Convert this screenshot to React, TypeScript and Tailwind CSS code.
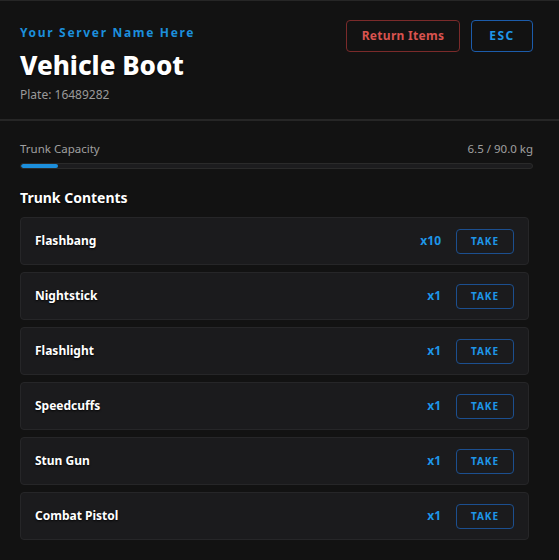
const items = [
    { name: "Flashbang", qty: 10 },
    { name: "Nightstick", qty: 1 },
    { name: "Flashlight", qty: 1 },
    { name: "Speedcuffs", qty: 1 },
    { name: "Stun Gun", qty: 1 },
    { name: "Combat Pistol", qty: 1 },
]

const App = () => {
    return (
        <div className="w-[559px] h-[560px] bg-[#121212] border-t border-[#262626] overflow-hidden font-['Noto_Sans',sans-serif] text-white">
            <div className="flex justify-between px-5 pt-[19px] pb-[16px] border-b-2 border-[#262626]">
                <div className="flex flex-col">
                    <p className="text-[12px] font-bold tracking-[0.14em] text-[#1c8fdc] leading-[16px] mt-[5px]">Your Server Name Here</p>
                    <h1 className="text-[26px] font-extrabold leading-[32px] mt-[8px] [text-shadow:0_1px_2px_rgba(0,0,0,0.8)]">Vehicle Boot</h1>
                    <p className="text-[12px] text-[#9a9a9a] leading-[16px] mt-[6px]">Plate: 16489282</p>
                </div>
                <div className="flex gap-[11px] pr-[6px]">
                    <button className="h-[32px] w-[114px] rounded border border-[#7a2a2a] text-[12px] font-bold text-[#d9534f] tracking-wide">Return Items</button>
                    <button className="h-[32px] w-[62px] rounded border border-[#1c5cab] text-[12px] font-bold text-[#1e96e8] tracking-[0.12em]">ESC</button>
                </div>
            </div>

            <div className="px-5 pt-[20px]">
                <div className="flex justify-between text-[11.5px] text-[#a0a0a0] leading-[16px] pr-[6px]">
                    <span>Trunk Capacity</span>
                    <span>6.5 / 90.0 kg</span>
                </div>
                <div className="mt-[6px] mr-[6px] h-[6px] rounded-full bg-[#1c1c1e] border border-[#2a2a2a] overflow-hidden">
                    <div className="h-full bg-[#1c8fdc] rounded-full" style={{ width: `${(6.5 / 90) * 100}%` }} />
                </div>

                <h2 className="text-[14px] font-bold mt-[20px] leading-[18px] [text-shadow:0_1px_2px_rgba(0,0,0,0.8)]">Trunk Contents</h2>

                <div className="flex flex-col gap-[7px] mt-[10px] pr-[10px]">
                    {items.map((item) => (
                        <div key={item.name} className="h-[48px] flex items-center justify-between pl-[14px] pr-[14px] bg-[#1b1b1d] border border-[#262628] rounded">
                            <span className="text-[12px] font-bold [text-shadow:0_1px_2px_rgba(0,0,0,0.9)]">{item.name}</span>
                            <div className="flex items-center gap-[15px]">
                                <span className="text-[12px] font-bold text-[#1e96e8]">x{item.qty}</span>
                                <button className="h-[25px] w-[58px] rounded border border-[#1c4f8f] text-[10px] font-bold text-[#1e96e8] tracking-[0.1em]">TAKE</button>
                            </div>
                        </div>
                    ))}
                </div>
            </div>
        </div>
    )
}

export default App
